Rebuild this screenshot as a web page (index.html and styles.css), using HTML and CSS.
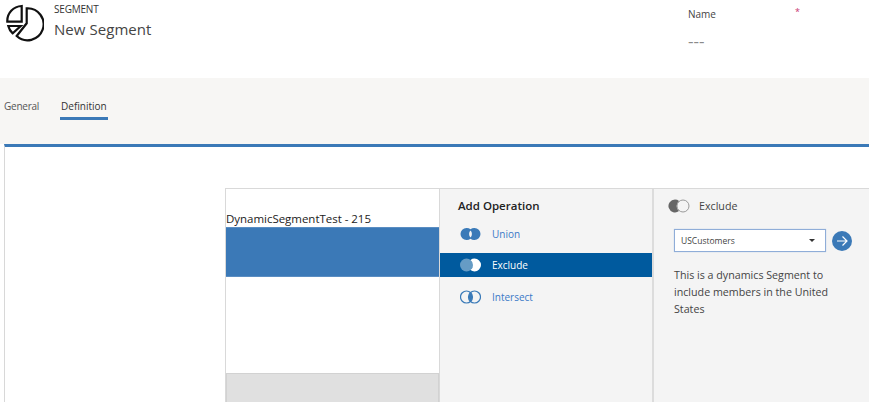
FILE: index.html
```html
<!DOCTYPE html>
<html lang="en">
<head>
<meta charset="utf-8">
<title>New Segment</title>
<link rel="stylesheet" href="styles.css">
</head>
<body>
<header class="header">
  <svg class="entity-icon" width="38" height="38" viewBox="0 0 38 38" fill="none" stroke="#111" stroke-width="2.200">
    <path d="M20.700 4.300 A16 16 0 1 1 10.700 32 L20.700 19.300 Z" />
    <path d="M15.700 2 V17.700 H1.300 A15 15 0 0 1 15.700 2 Z" />
    <path d="M2.300 22 H14.700 L6.700 29.300 A14 14 0 0 1 2.300 22 Z" />
  </svg>
  <div class="titles">
    <div class="entity">SEGMENT</div>
    <div class="record">New Segment</div>
  </div>
  <div class="name-field">
    <div class="name-label"><span>Name</span><span class="req">*</span></div>
    <div class="name-value">---</div>
  </div>
</header>
<nav class="tabs">
  <a class="tab">General</a>
  <a class="tab active">Definition</a>
</nav>
<main class="content">
  <div class="designer">
    <section class="canvas">
      <div class="seg-title">DynamicSegmentTest - 215</div>
      <div class="seg-block"></div>
      <div class="seg-space"></div>
      <div class="seg-foot"></div>
    </section>
    <section class="ops">
      <h2 class="ops-title">Add Operation</h2>
      <div class="op">
        <svg class="op-icon" width="21" height="14" viewBox="0.500 0 21 14"><path fill="#3a7ab8" fill-rule="evenodd" d="M7 1a6 6 0 0 1 4 1.300A6 6 0 0 1 15 1a6 6 0 0 1 0 12 6 6 0 0 1-4-1.300A6 6 0 0 1 7 13 6 6 0 0 1 7 1zM11 3.500a5 5 0 0 0 0 7 5 5 0 0 0 0-7z"/></svg>
        <span>Union</span>
      </div>
      <div class="op selected">
        <svg class="op-icon" width="21" height="14" viewBox="0.500 0 21 14"><circle cx="7" cy="7" r="6.500" fill="#fff" opacity=".4"/><path fill="#fff" fill-rule="evenodd" d="M15 .5a6.500 6.500 0 0 1 0 13 6.500 6.500 0 0 1-4-1.400 6.500 6.500 0 0 0 0-10.200A6.500 6.500 0 0 1 15 .5z"/></svg>
        <span>Exclude</span>
      </div>
      <div class="op">
        <svg class="op-icon" width="21" height="14" viewBox="0.500 0 21 14"><g fill="none" stroke="#3a7ab8" stroke-width="1.200"><circle cx="7" cy="7" r="6"/><circle cx="15" cy="7" r="6"/></g><path fill="#3a7ab8" d="M11 2.600a6 6 0 0 1 0 8.800 6 6 0 0 1 0-8.800z"/></svg>
        <span>Intersect</span>
      </div>
    </section>
    <section class="detail">
      <div class="detail-head">
        <svg class="op-icon" width="22" height="14" viewBox="0 0 22 14"><circle cx="15" cy="7" r="6" fill="#f4f4f4" stroke="#9a9a9a" stroke-width="1"/><path fill="#666" d="M7 .5a6.500 6.500 0 0 1 4 1.400 6.500 6.500 0 0 0 0 10.200A6.500 6.500 0 1 1 7 .5z"/></svg>
        <span>Exclude</span>
      </div>
      <div class="picker">
        <div class="select"><span>USCustomers</span><i class="caret"></i></div>
        <button class="go" type="button" aria-label="Add">
          <svg width="12" height="12" viewBox="0 0 12 12" fill="none" stroke="#fff" stroke-width="1.200"><path d="M1 6h10M6.500 1.500 11 6l-4.500 4.500"/></svg>
        </button>
      </div>
      <p class="desc">This is a dynamics Segment to include members in the United States</p>
    </section>
  </div>
</main>
</body>
</html>
```
FILE: styles.css
```css
* { box-sizing: border-box; }
html, body { margin: 0; height: 100%; overflow: hidden; }
body {
  background: #fff;
  font-family: "Open Sans", "Noto Sans", sans-serif;
  color: #333;
}
.header {
  display: flex;
  height: 78px;
  padding-left: 6px;
}
.entity-icon { margin-top: 4px; flex: none; }
.titles { margin-left: 10px; }
.entity { font-size: 10px; line-height: 14px; margin-top: 2px; color: #333; letter-spacing: -.2px; }
.record { font-size: 15px; line-height: 20px; margin-top: 3px; color: #444; letter-spacing: .05px; }
.name-field { margin-left: auto; width: 181px; }
.name-label {
  display: flex;
  justify-content: space-between;
  width: 112px;
  font-size: 10px;
  line-height: 14px;
  margin-top: 7px;
  color: #444;
}
.req { color: #c8366e; font-size: 9px; line-height: 10px; }
.name-value { font-size: 17px; line-height: 18px; margin-top: 11px; color: #8a8a8a; }
.tabs {
  display: flex;
  gap: 21px;
  height: 66px;
  padding: 21px 0 0 4px;
  background: #f7f6f4;
}
.tab {
  height: 21px;
  font-size: 10px;
  line-height: 15px;
  color: #555;
  letter-spacing: -.25px;
}
.tab.active {
  padding: 0 1px;
  color: #333;
  font-weight: 500;
  letter-spacing: 0;
  border-bottom: 3px solid #3b79b7;
}
.content {
  margin-left: 4px;
  height: 258px;
  border-top: 3px solid #3b79b7;
  border-left: 1px solid #d8d8d8;
  padding: 41px 0 0 220px;
  background: #fff;
}
.designer {
  display: flex;
  height: 217px;
  border-top: 1px solid #d9d9d9;
  border-left: 1px solid #d9d9d9;
}
.canvas {
  width: 214px;
  display: flex;
  flex-direction: column;
  border-right: 1px solid #d9d9d9;
}
.seg-title {
  height: 38px;
  padding-top: 22px;
  font-size: 11.5px;
  letter-spacing: -.03px;
  line-height: 16px;
  color: #222;
  white-space: nowrap;
}
.seg-block {
  height: 50px;
  background: #3b79b7;
  border-top: 1px solid #5a8dc2;
  border-bottom: 1px solid #5a8dc2;
}
.seg-space { height: 96px; }
.seg-foot {
  flex: 1;
  background: #e0e0e0;
  border: 1px solid #d2d2d2;
}
.ops {
  width: 214px;
  background: #f4f4f4;
  border-right: 2px solid #dcdcdc;
}
.ops-title {
  margin: 0;
  padding: 9px 0 0 18px;
  height: 33px;
  font-size: 11.5px;
  line-height: 16px;
  font-weight: 600;
  color: #222;
}
.op {
  display: flex;
  align-items: center;
  height: 24px;
  padding-left: 20px;
  gap: 11px;
  font-size: 10px;
  color: #3b79c7;
}
.op.selected { margin: 7px 0 7.500px; background: #005a9e; color: #fff; }
.op-icon { flex: none; }
.detail {
  flex: 1;
  background: #f4f4f4;
  padding-left: 14px;
}
.detail-head {
  display: flex;
  align-items: center;
  gap: 9px;
  height: 14px;
  margin-top: 10px;
  font-size: 10.7px;
  color: #444;
}
.picker {
  display: flex;
  align-items: center;
  gap: 6px;
  margin: 16px 0 0 6px;
}
.select {
  display: flex;
  align-items: center;
  justify-content: space-between;
  width: 152px;
  height: 23px;
  padding: 0 10px 0 6px;
  background: #fff;
  border: 1px solid #8fadd8;
  box-shadow: 0 0 1px #a9c0e2;
  font-size: 8.500px;
  color: #444;
}
.caret {
  width: 0;
  height: 0;
  border-left: 3px solid transparent;
  border-right: 3px solid transparent;
  border-top: 3px solid #333;
}
.go {
  width: 20px;
  height: 20px;
  padding: 0;
  display: flex;
  align-items: center;
  justify-content: center;
  border: 0;
  border-radius: 50%;
  background: #3b79b7;
}
.desc {
  margin: 15px 0 0 6px;
  width: 172px;
  font-size: 10.700px;
  line-height: 17px;
  color: #444;
}
```
